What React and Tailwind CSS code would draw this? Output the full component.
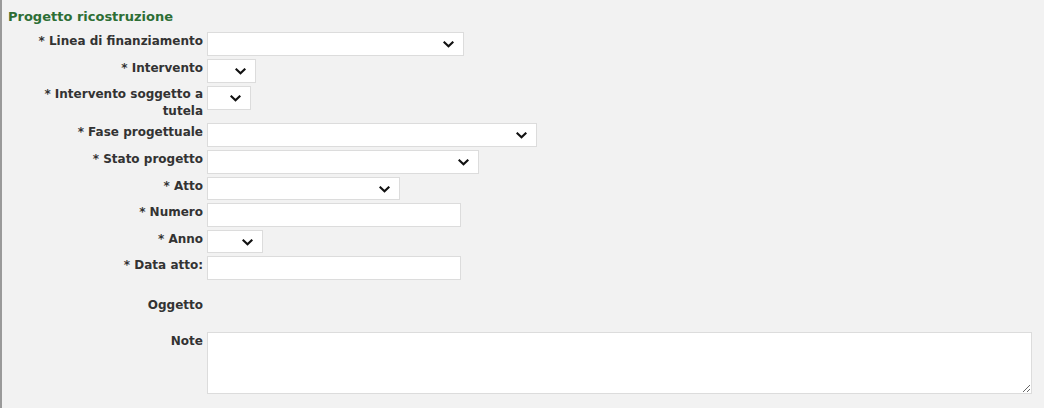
import { useState } from 'react';

const font = { fontFamily: '"DejaVu Sans", Verdana, sans-serif' };

function Field({ label, children, className = '' }) {
  return (
    <>
      <label className={`text-right font-bold text-[#333] text-[12px] leading-[17px] ${className}`}>
        {label}
      </label>
      <div className="flex items-start">{children}</div>
    </>
  );
}

function Select({ width, height = 'h-6' }) {
  return (
    <div className={`relative bg-white border border-[#dcdcdc] ${height} ${width}`}>
      <select className="absolute inset-0 w-full h-full opacity-0">
        <option value=""></option>
      </select>
      <svg className="absolute right-[9px] top-[8px] w-[11px] h-[7px]" viewBox="0 0 11 7">
        <path d="M1.5 1.5 L5.5 5.2 L9.5 1.5" fill="none" stroke="#111" strokeWidth="2.2" strokeLinecap="square" />
      </svg>
    </div>
  );
}

function Input({ width, value, onChange }) {
  return (
    <input
      className={`h-6 bg-white border border-[#dcdcdc] outline-none px-1 text-[12px] ${width}`}
      value={value}
      onChange={(e) => onChange(e.target.value)}
    />
  );
}

export default function App() {
  const [numero, setNumero] = useState('');
  const [data, setData] = useState('');
  const [note, setNote] = useState('');

  return (
    <div className="w-[1044px] h-[408px] bg-[#f2f2f2] border-l-2 border-[#9a9a9a] overflow-hidden" style={font}>
      <h2 className="pl-[6px] pt-[8px] h-[32px] text-[13px] font-bold text-[#2d6e35] leading-[17px]">
        Progetto ricostruzione
      </h2>

      <div className="grid grid-cols-[201px_825px] gap-x-[4px] gap-y-[3px]">
        <Field label="* Linea di finanziamento" className="pt-[1px]"><Select width="w-[257px]" /></Field>
        <Field label="* Intervento" className="pt-[1px]"><Select width="w-[49px]" /></Field>
        <Field label="* Intervento soggetto a tutela"><Select width="w-[44px]" /></Field>
        <Field label="* Fase progettuale" className="pt-[1px]"><Select width="w-[330px]" /></Field>
        <Field label="* Stato progetto" className="pt-[1px]"><Select width="w-[272px]" /></Field>
        <Field label="* Atto" className="pt-[1px]"><Select width="w-[193px]" height="h-[23px]" /></Field>
        <Field label="* Numero" className="pt-[1px]"><Input width="w-[254px]" value={numero} onChange={setNumero} /></Field>
        <Field label="* Anno" className="pt-[1px]"><Select width="w-[56px]" height="h-[23px]" /></Field>
        <Field label="* Data atto:" className="pt-[1px]"><Input width="w-[254px]" value={data} onChange={setData} /></Field>
        <Field label="Oggetto" className="pt-[14px] h-[46px]"><div /></Field>
        <Field label="Note" className="pt-[1px]">
          <textarea
            className="w-[825px] h-[62px] bg-white border border-[#dcdcdc] outline-none p-1 text-[12px]"
            value={note}
            onChange={(e) => setNote(e.target.value)}
          />
        </Field>
      </div>
    </div>
  );
}
